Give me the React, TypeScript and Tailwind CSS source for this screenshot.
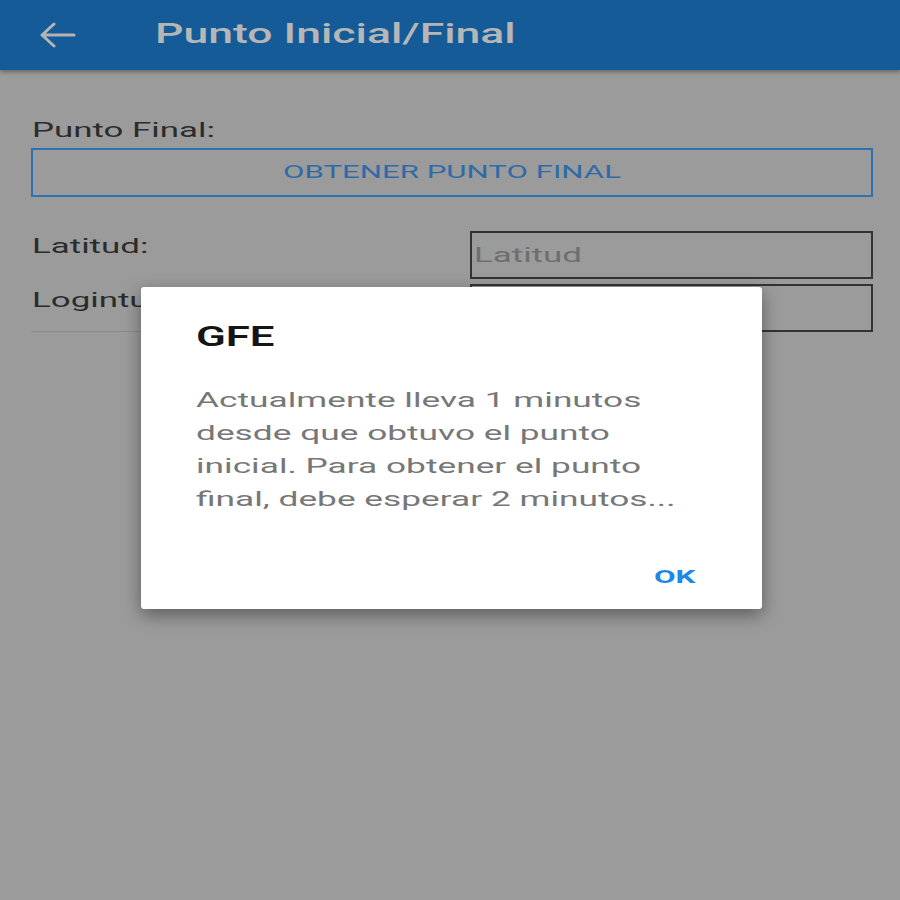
export default function App() {
  return (
    <div className="relative w-[900px] h-[900px] overflow-hidden bg-[#9b9b9b] font-['Roboto',sans-serif]">
      <header className="h-[70px] bg-[#155b98] flex items-center shadow-[0_2px_4px_rgba(0,0,0,0.35)]">
        <svg className="ml-[39px] w-[37px] h-[26px]" viewBox="0 0 37 26" fill="none" stroke="#b4b4b4" strokeWidth="3" strokeLinecap="round" strokeLinejoin="round">
          <path d="M35 13H3M15 2L3 13l12 11" />
        </svg>
        <h1 className="ml-[79px] -mt-[3px] text-[28px] font-medium text-[#b6b6b6] leading-none">
          <span className="inline-block scale-x-[1.59] origin-left">Punto Inicial/Final</span>
        </h1>
      </header>

      <main className="pl-[31px] pr-[27px] pt-[46px]">
        <p className="text-[21px] text-[#2c2c2c] leading-[28px] pl-[1px]">
          <span className="inline-block scale-x-[1.66] origin-left">Punto Final:</span>
        </p>
        <div className="mt-[4px] h-[49px] border-2 border-[#2e72b2] flex items-center justify-center">
          <span className="inline-block scale-x-[1.64] text-[19px] text-[#2e6ba7]">OBTENER PUNTO FINAL</span>
        </div>

        <div className="mt-[34px] flex">
          <span className="flex-1 text-[21px] text-[#2c2c2c] pl-[1px]">
            <span className="inline-block scale-x-[1.66] origin-left">Latitud:</span>
          </span>
          <div className="w-[403px] h-[48px] border-2 border-[#333333] flex items-center pt-[2px]">
            <span className="inline-block scale-x-[1.66] origin-left text-[21px] text-[#6e6e6e] ml-[2px]">Latitud</span>
          </div>
        </div>
        <div className="mt-[5px] flex">
          <div className="flex-1 border-b border-[#8a8a8a] pt-[1px] pl-[1px]">
            <span className="inline-block scale-x-[1.66] origin-left text-[21px] text-[#2c2c2c]">Logintud:</span>
          </div>
          <div className="w-[403px] h-[48px] border-2 border-[#333333]" />
        </div>
      </main>

      <div className="absolute left-[141px] top-[287px] w-[621px] h-[322px] bg-white rounded-[3px] shadow-[0_6px_18px_rgba(0,0,0,0.4)] flex flex-col">
        <h2 className="ml-[55px] mt-[33px] text-[27px] font-semibold text-[#151515] leading-[34px]">
          <span className="inline-block scale-x-[1.62] origin-left">GFE</span>
        </h2>
        <div className="ml-[55px] mt-[30px] text-[21px] leading-[33px] text-[#777777] flex flex-col items-start">
          <span className="inline-block scale-x-[1.68] origin-left whitespace-nowrap">Actualmente lleva 1 minutos</span>
          <span className="inline-block scale-x-[1.68] origin-left whitespace-nowrap">desde que obtuvo el punto</span>
          <span className="inline-block scale-x-[1.68] origin-left whitespace-nowrap">inicial. Para obtener el punto</span>
          <span className="inline-block scale-x-[1.68] origin-left whitespace-nowrap">final, debe esperar 2 minutos...</span>
        </div>
        <div className="mt-auto mb-[18px] ml-[513px] flex">
          <span className="inline-block scale-x-[1.65] origin-left text-[19px] font-bold text-[#1e88e5]">OK</span>
        </div>
      </div>
    </div>
  );
}
